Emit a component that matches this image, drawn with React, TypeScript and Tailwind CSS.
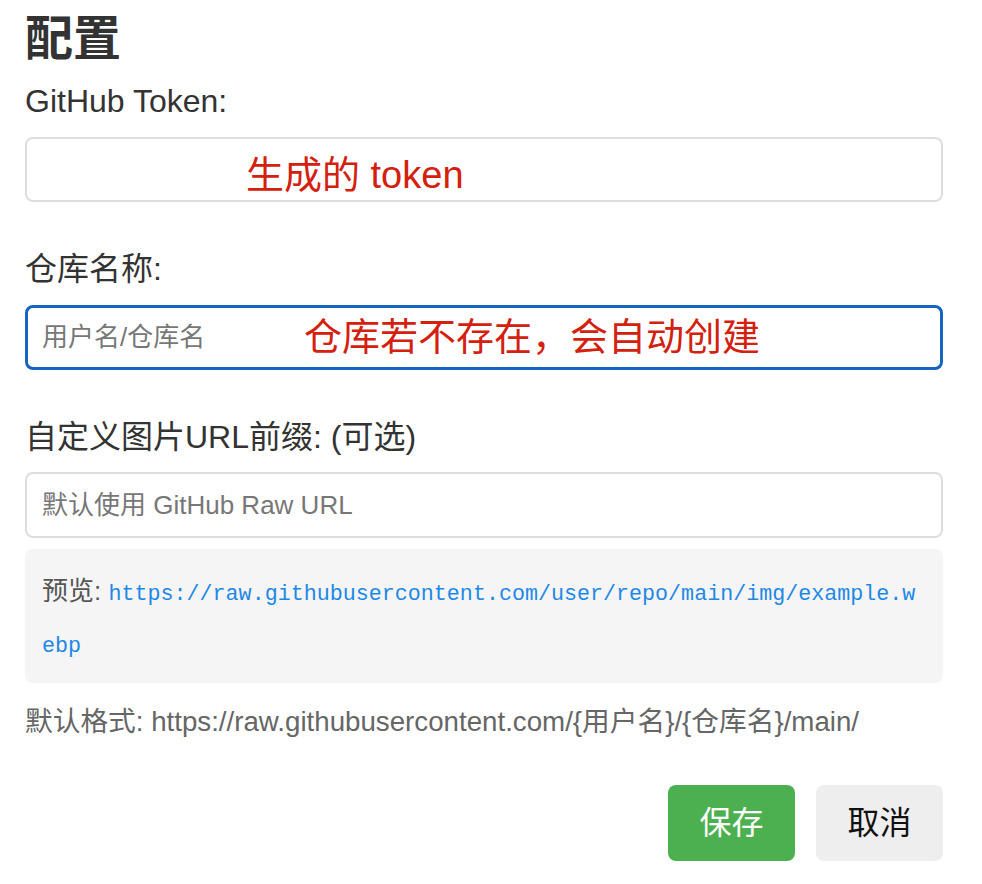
import { useState } from "react"

const sans = "font-['Liberation_Sans','Noto_Sans_CJK_SC',sans-serif]"

export default function App() {
	const [token, setToken] = useState("")
	const [repo, setRepo] = useState("")
	const [prefix, setPrefix] = useState("")

	return (
		<div className={`min-h-screen bg-white ${sans}`}>
			<div className="w-[918px] ml-[25px] pt-[15px]">
				<h2 className="text-[48px] leading-[48px] font-bold text-[#333]">配置</h2>

				<label className="block mt-[18px] text-[32px] leading-[40px] text-[#333]">GitHub Token:</label>
				<div className="relative mt-[16px]">
					<input
						type="password"
						value={token}
						onChange={(e) => setToken(e.target.value)}
						className="block w-full h-[65px] px-[15px] text-[26px] border-2 border-[#ddd] rounded-[8px] outline-none"
					/>
					<span className="absolute left-[221px] top-[19px] text-[38px] leading-[38px] text-[#d3200f] pointer-events-none">
						生成的 token
					</span>
				</div>

				<label className="block mt-[47px] text-[32px] leading-[40px] text-[#333]">仓库名称:</label>
				<div className="relative mt-[16px]">
					<input
						type="text"
						value={repo}
						onChange={(e) => setRepo(e.target.value)}
						placeholder="用户名/仓库名"
						className="block w-full h-[65px] px-[14px] text-[26px] border-[3px] border-[#1565c0] rounded-[8px] outline-none placeholder:text-[#777]"
					/>
					<span className="absolute left-[279px] top-[13px] text-[38px] leading-[38px] text-[#d3200f] pointer-events-none">
						仓库若不存在，会自动创建
					</span>
				</div>

				<label className="block mt-[47px] text-[32px] leading-[40px] text-[#333]">自定义图片URL前缀: (可选)</label>
				<input
					type="text"
					value={prefix}
					onChange={(e) => setPrefix(e.target.value)}
					placeholder="默认使用 GitHub Raw URL"
					className="block w-full h-[66px] mt-[15px] px-[15px] text-[26px] border-2 border-[#ddd] rounded-[8px] outline-none placeholder:text-[#777]"
				/>

				<div className="mt-[11px] h-[134px] bg-[#f5f5f5] rounded-[8px] px-[17px] pt-[18px] text-[26px] leading-[49px] text-[#555] break-all">
					预览:{" "}
					<span className="font-['Liberation_Mono',monospace] text-[21.7px] leading-[49px] text-[#1e88e5]">
						https://raw.githubusercontent.com/user/repo/main/img/example.webp
					</span>
				</div>

				<p className="mt-[19px] text-[27.7px] leading-[40px] text-[#666]">
					默认格式: https://raw.githubusercontent.com/{"{用户名}"}/{"{仓库名}"}/main/
				</p>

				<div className="mt-[43px] flex justify-end gap-[21px]">
					<button className="w-[127px] h-[76px] rounded-[8px] bg-[#4caf50] text-white text-[32px]">保存</button>
					<button className="w-[127px] h-[76px] rounded-[8px] bg-[#eeeeee] text-[#111] text-[32px]">取消</button>
				</div>
			</div>
		</div>
	)
}
